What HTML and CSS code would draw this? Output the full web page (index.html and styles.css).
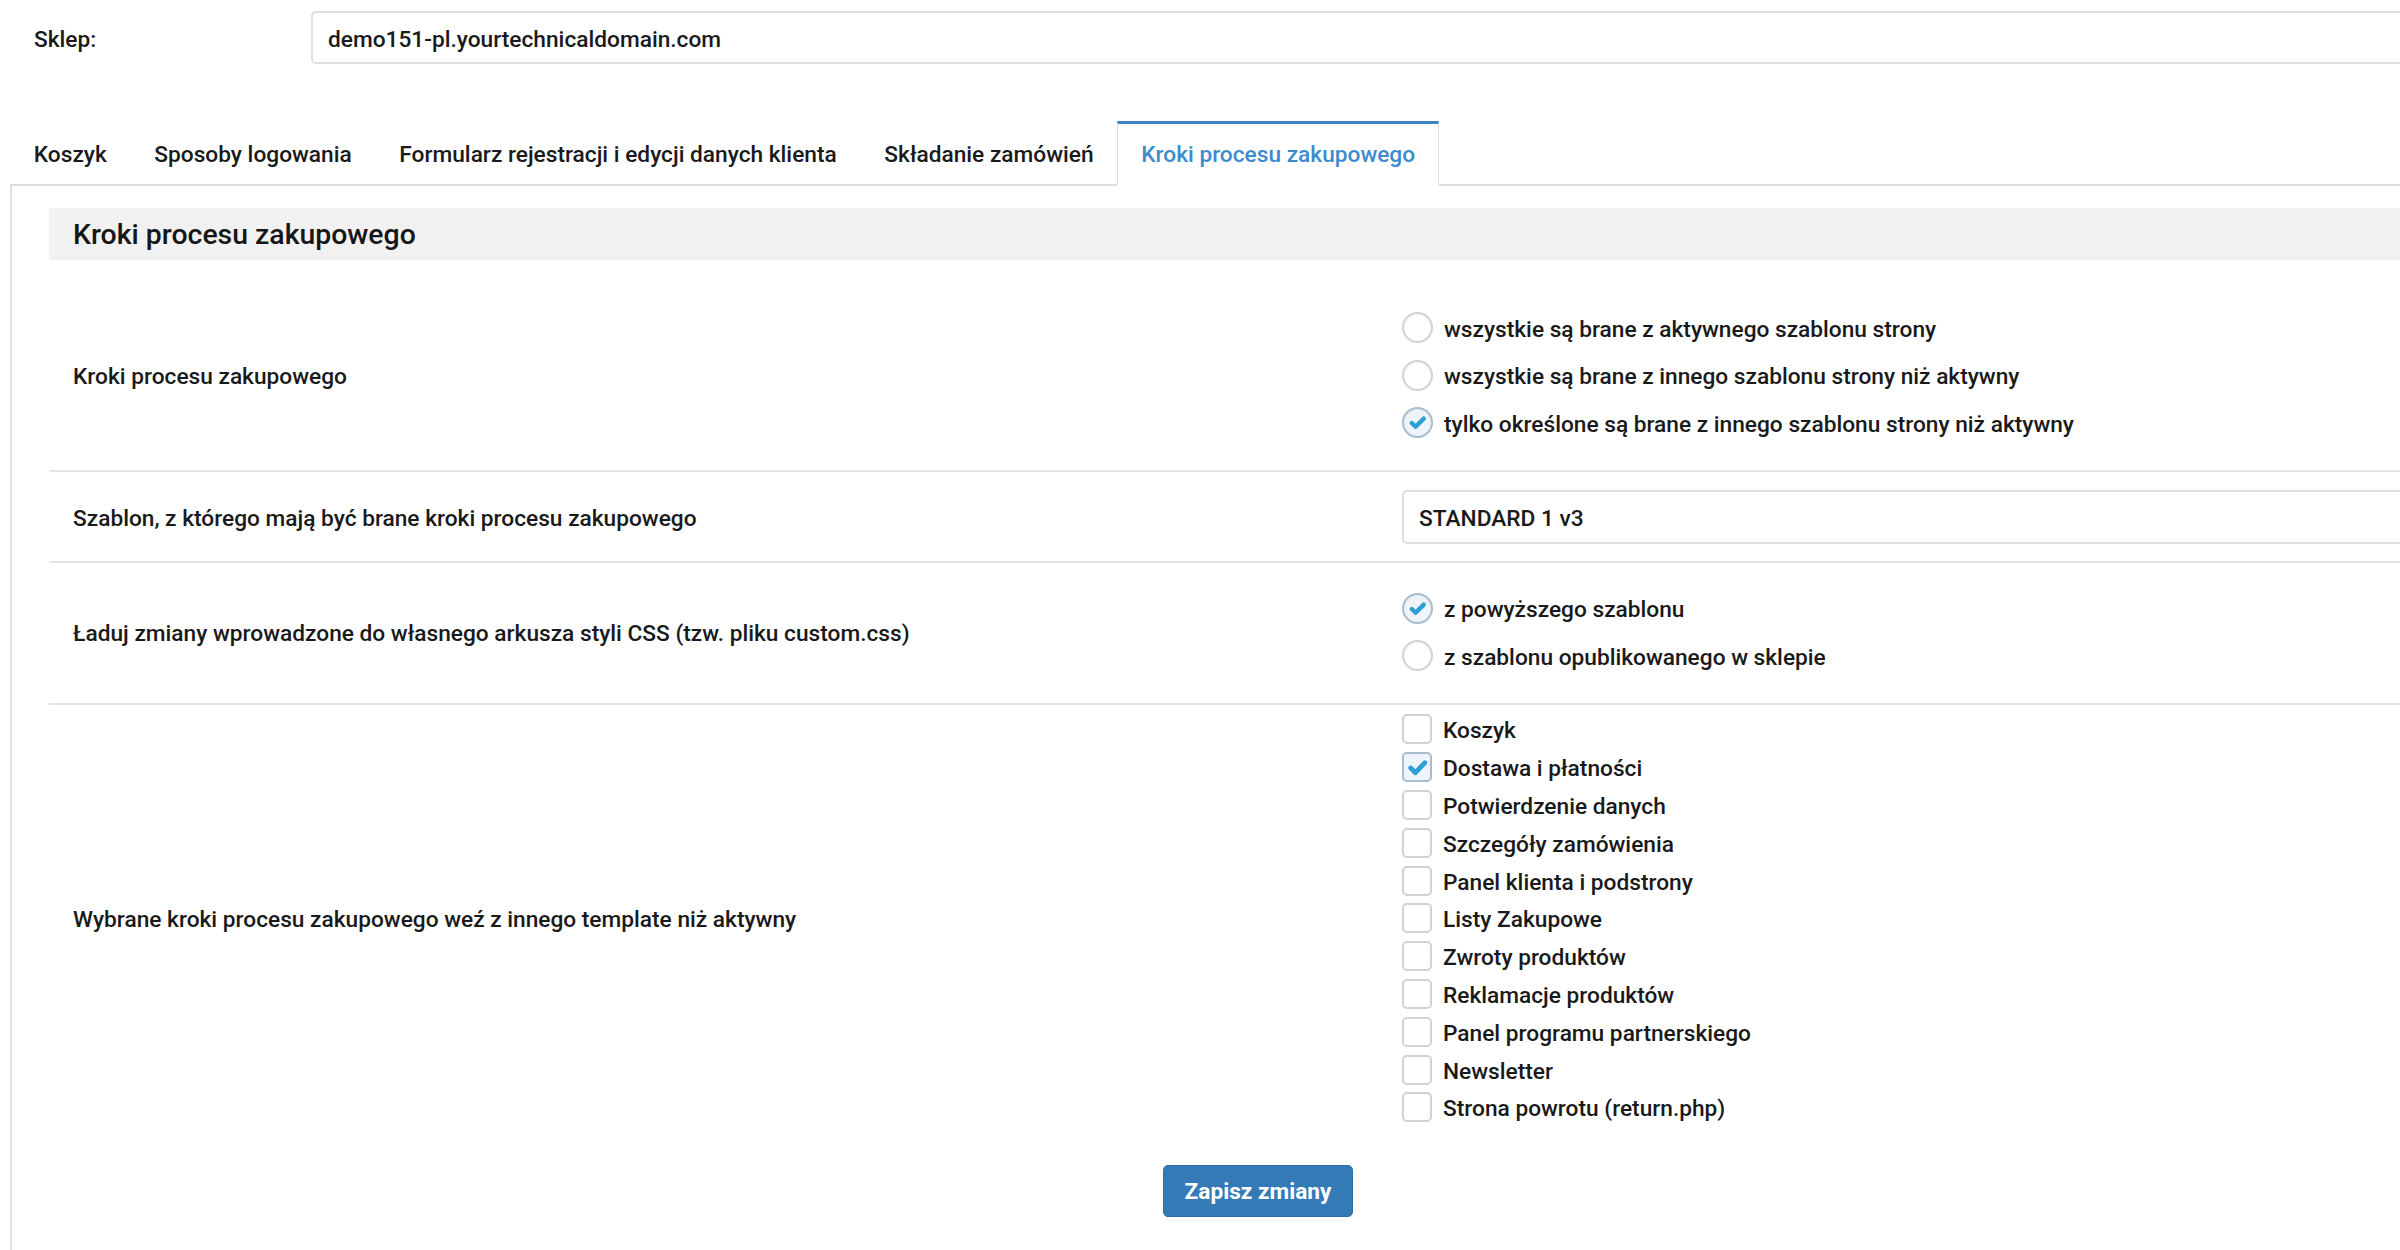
FILE: index.html
```html
<!DOCTYPE html>
<html lang="pl">
<head>
<meta charset="utf-8">
<title>Kroki procesu zakupowego</title>
<link rel="stylesheet" href="styles.css">
</head>
<body>
<div class="page">
  <div class="shop-row">
    <label class="shop-label">Sklep:</label>
    <div class="shop-input">demo151-pl.yourtechnicaldomain.com</div>
  </div>

  <ul class="tabs">
    <li class="tab">Koszyk</li>
    <li class="tab">Sposoby logowania</li>
    <li class="tab">Formularz rejestracji i edycji danych klienta</li>
    <li class="tab">Składanie zamówień</li>
    <li class="tab active">Kroki procesu zakupowego</li>
  </ul>

  <div class="pane">
    <div class="content">
      <h2 class="section-title">Kroki procesu zakupowego</h2>

      <div class="row">
        <div class="row-label">Kroki procesu zakupowego</div>
        <div class="row-field">
          <div class="radio"><span class="radio-mark"></span><span class="opt-text">wszystkie są brane z aktywnego szablonu strony</span></div>
          <div class="radio"><span class="radio-mark"></span><span class="opt-text">wszystkie są brane z innego szablonu strony niż aktywny</span></div>
          <div class="radio"><span class="radio-mark checked"><svg viewBox="0 0 24 24"><path d="M6 12.5l4 4L18.5 8"/></svg></span><span class="opt-text">tylko określone są brane z innego szablonu strony niż aktywny</span></div>
        </div>
      </div>

      <div class="row row-select">
        <div class="row-label">Szablon, z którego mają być brane kroki procesu zakupowego</div>
        <div class="row-field">
          <div class="select">STANDARD 1 v3</div>
        </div>
      </div>

      <div class="row">
        <div class="row-label">Ładuj zmiany wprowadzone do własnego arkusza styli CSS (tzw. pliku custom.css)</div>
        <div class="row-field">
          <div class="radio"><span class="radio-mark checked"><svg viewBox="0 0 24 24"><path d="M6 12.5l4 4L18.5 8"/></svg></span><span class="opt-text">z powyższego szablonu</span></div>
          <div class="radio"><span class="radio-mark"></span><span class="opt-text">z szablonu opublikowanego w sklepie</span></div>
        </div>
      </div>

      <div class="row row-checks">
        <div class="row-label">Wybrane kroki procesu zakupowego weź z innego template niż aktywny</div>
        <div class="row-field">
          <div class="check"><span class="check-mark"></span><span class="opt-text">Koszyk</span></div>
          <div class="check"><span class="check-mark checked"><svg viewBox="0 0 24 24"><path d="M5.5 12.5l4.5 4.5L19 7.5"/></svg></span><span class="opt-text">Dostawa i płatności</span></div>
          <div class="check"><span class="check-mark"></span><span class="opt-text">Potwierdzenie danych</span></div>
          <div class="check"><span class="check-mark"></span><span class="opt-text">Szczegóły zamówienia</span></div>
          <div class="check"><span class="check-mark"></span><span class="opt-text">Panel klienta i podstrony</span></div>
          <div class="check"><span class="check-mark"></span><span class="opt-text">Listy Zakupowe</span></div>
          <div class="check"><span class="check-mark"></span><span class="opt-text">Zwroty produktów</span></div>
          <div class="check"><span class="check-mark"></span><span class="opt-text">Reklamacje produktów</span></div>
          <div class="check"><span class="check-mark"></span><span class="opt-text">Panel programu partnerskiego</span></div>
          <div class="check"><span class="check-mark"></span><span class="opt-text">Newsletter</span></div>
          <div class="check"><span class="check-mark"></span><span class="opt-text">Strona powrotu (return.php)</span></div>
        </div>
      </div>

      <div class="actions">
        <button class="btn" type="button">Zapisz zmiany</button>
      </div>
    </div>
  </div>
</div>
</body>
</html>
```

FILE: styles.css
```css
html, body {
  margin: 0;
  padding: 0;
  background: #ffffff;
  overflow: hidden;
}

body {
  font-family: Roboto, "Liberation Sans", Arial, sans-serif;
  font-weight: 500;
  font-size: 22.7px;
  color: #1a1a1a;
}

.page {
  width: 2520px;
}

/* shop selector */
.shop-row {
  display: flex;
  align-items: center;
  padding-top: 11px;
}

.shop-label {
  width: 311px;
  box-sizing: border-box;
  padding: 3px 0 0 34px;
}

.shop-input {
  flex: 1;
  height: 53px;
  box-sizing: border-box;
  border: 2px solid #dedede;
  border-radius: 5px;
  padding: 2px 15px 0;
  line-height: 49px;
}

/* tabs */
.tabs {
  list-style: none;
  margin: 57px 0 0 10px;
  padding: 0;
  display: flex;
  border-bottom: 2px solid #dddddd;
}

.tab {
  padding: 19px 22.8px 19px;
  line-height: 24px;
  border-top: 3px solid transparent;
  border-left: 1px solid transparent;
  border-right: 1px solid transparent;
  margin-bottom: -2px;
  white-space: nowrap;
}

.tab.active {
  color: #3d8bcd;
  background: #ffffff;
  border-top-color: #3c84c2;
  border-left-color: #dddddd;
  border-right-color: #dddddd;
  border-bottom: 2px solid #ffffff;
  padding-bottom: 17px;
}

/* pane */
.pane {
  margin-left: 10px;
  border-left: 2px solid #e2e2e2;
  padding: 22px 0 40px 37px;
}

.content {
  width: 2418px;
}

.section-title {
  margin: 0 0 22px;
  height: 52px;
  line-height: 54px;
  padding-left: 24px;
  background: #f1f1f1;
  font-size: 28.4px;
  font-weight: 500;
  color: #161616;
}

.row {
  display: grid;
  grid-template-columns: 1353px 1fr;
  align-items: center;
  padding: 22px 0 23px;
  border-bottom: 2px solid #e4e4e4;
}

.row-select {
  padding: 18px 0 17px;
}

.row-checks {
  padding: 6px 0 0;
  border-bottom: none;
}

.row-label {
  padding: 3px 0 0 24px;
}

.opt-text {
  padding-top: 3px;
}

/* radios */
.radio {
  display: flex;
  align-items: center;
  height: 47.5px;
  gap: 11px;
}

.radio-mark {
  width: 31px;
  height: 31px;
  box-sizing: border-box;
  border: 2px solid #d2d2d2;
  border-radius: 50%;
  background: #ffffff;
  box-shadow: inset 0 1px 2px rgba(0, 0, 0, 0.05);
  display: flex;
  align-items: center;
  justify-content: center;
  flex: none;
}

.radio-mark.checked,
.check-mark.checked {
  border-color: #a8bdd0;
  background: #eef4fa;
}

.radio-mark svg {
  width: 23px;
  height: 23px;
}

.radio-mark svg path,
.check-mark svg path {
  fill: none;
  stroke: #2b9fd6;
  stroke-width: 4.6;
  stroke-linecap: round;
  stroke-linejoin: round;
}

/* select */
.select {
  height: 54px;
  box-sizing: border-box;
  border: 2px solid #dedede;
  border-radius: 5px;
  padding: 2px 0 0 15px;
  line-height: 50px;
}

/* checkboxes */
.check {
  display: flex;
  align-items: center;
  height: 37.8px;
  gap: 11px;
}

.check-mark {
  width: 30px;
  height: 30px;
  box-sizing: border-box;
  border: 2px solid #d2d2d2;
  border-radius: 5px;
  background: #ffffff;
  display: flex;
  align-items: center;
  justify-content: center;
  flex: none;
}

.check-mark svg {
  width: 25px;
  height: 25px;
}

/* actions */
.actions {
  text-align: center;
  padding-top: 39px;
}

.btn {
  width: 190px;
  height: 52px;
  border: 1px solid #2e6da4;
  border-radius: 5px;
  background: #337ab7;
  color: #ffffff;
  font-family: Roboto, "Liberation Sans", Arial, sans-serif;
  font-size: 22.7px;
  font-weight: 700;
  cursor: pointer;
}
```
